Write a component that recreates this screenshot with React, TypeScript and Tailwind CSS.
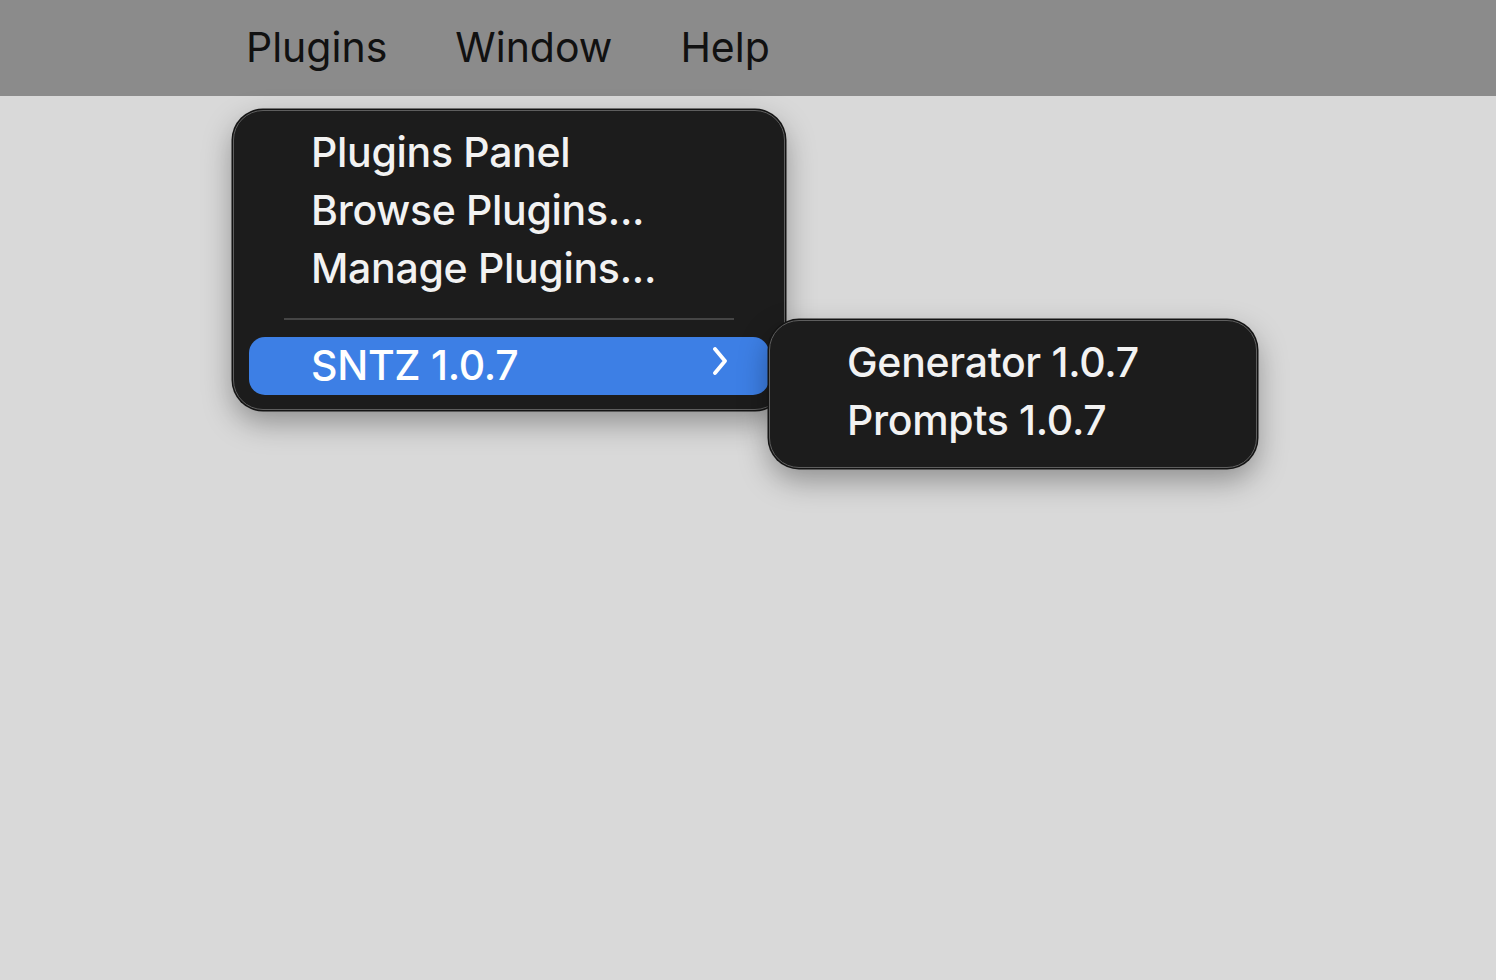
import React from "react";

const font = { fontFamily: "Inter, 'Noto Sans', 'Liberation Sans', sans-serif" };

function Chevron() {
  return (
    <svg width="18" height="30" viewBox="0 0 18 30" fill="none" className="-mt-[8px]">
      <path d="M4 2 L14 14 L4 26" stroke="white" strokeWidth="3.8" strokeLinecap="round" strokeLinejoin="round" />
    </svg>
  );
}

export default function App() {
  return (
    <div className="w-[1496px] h-[980px] bg-[#d9d9d9] relative overflow-hidden" style={font}>
      {/* menu bar */}
      <div className="h-[96px] bg-[#8b8b8b] flex items-center pl-[246px] gap-[68px] text-[#111] text-[41px] pb-[2px]">
        <span className="leading-none">Plugins</span>
        <span className="leading-none">Window</span>
        <span className="leading-none">Help</span>
      </div>

      {/* Plugins dropdown */}
      <div className="absolute left-[233px] top-[110px] w-[552px] h-[300px] rounded-[30px] bg-[#1c1c1c] border-[1.5px] border-[#5e5e5e] shadow-[0_0_0_1.5px_#141414,0_12px_30px_rgba(0,0,0,0.35)] text-[#f2f2f2] text-[41px] font-medium tracking-[-0.3px] px-[15px] pt-[13px]">
        <div className="h-[58px] flex items-center pl-[62px]">Plugins Panel</div>
        <div className="h-[58px] flex items-center pl-[62px]">Browse Plugins...</div>
        <div className="h-[58px] flex items-center pl-[62px]">Manage Plugins...</div>
        <div className="mx-[35px] mt-[20px] mb-[17px] h-[2px] bg-[#454545]" />
        <div className="h-[58px] flex items-center justify-between pl-[62px] pr-[40px] rounded-[16px] bg-[#3d7fe5] text-white">
          <span>SNTZ 1.0.7</span>
          <Chevron />
        </div>
      </div>

      {/* SNTZ submenu */}
      <div className="absolute left-[769px] top-[320px] w-[488px] h-[148px] rounded-[30px] bg-[#1c1c1c] border-[1.5px] border-[#5e5e5e] shadow-[0_0_0_1.5px_#141414,0_12px_30px_rgba(0,0,0,0.35)] text-[#f2f2f2] text-[41px] font-medium tracking-[-0.3px] pt-[13px] pl-[77px]">
        <div className="h-[58px] flex items-center">Generator 1.0.7</div>
        <div className="h-[58px] flex items-center">Prompts 1.0.7</div>
      </div>
    </div>
  );
}
